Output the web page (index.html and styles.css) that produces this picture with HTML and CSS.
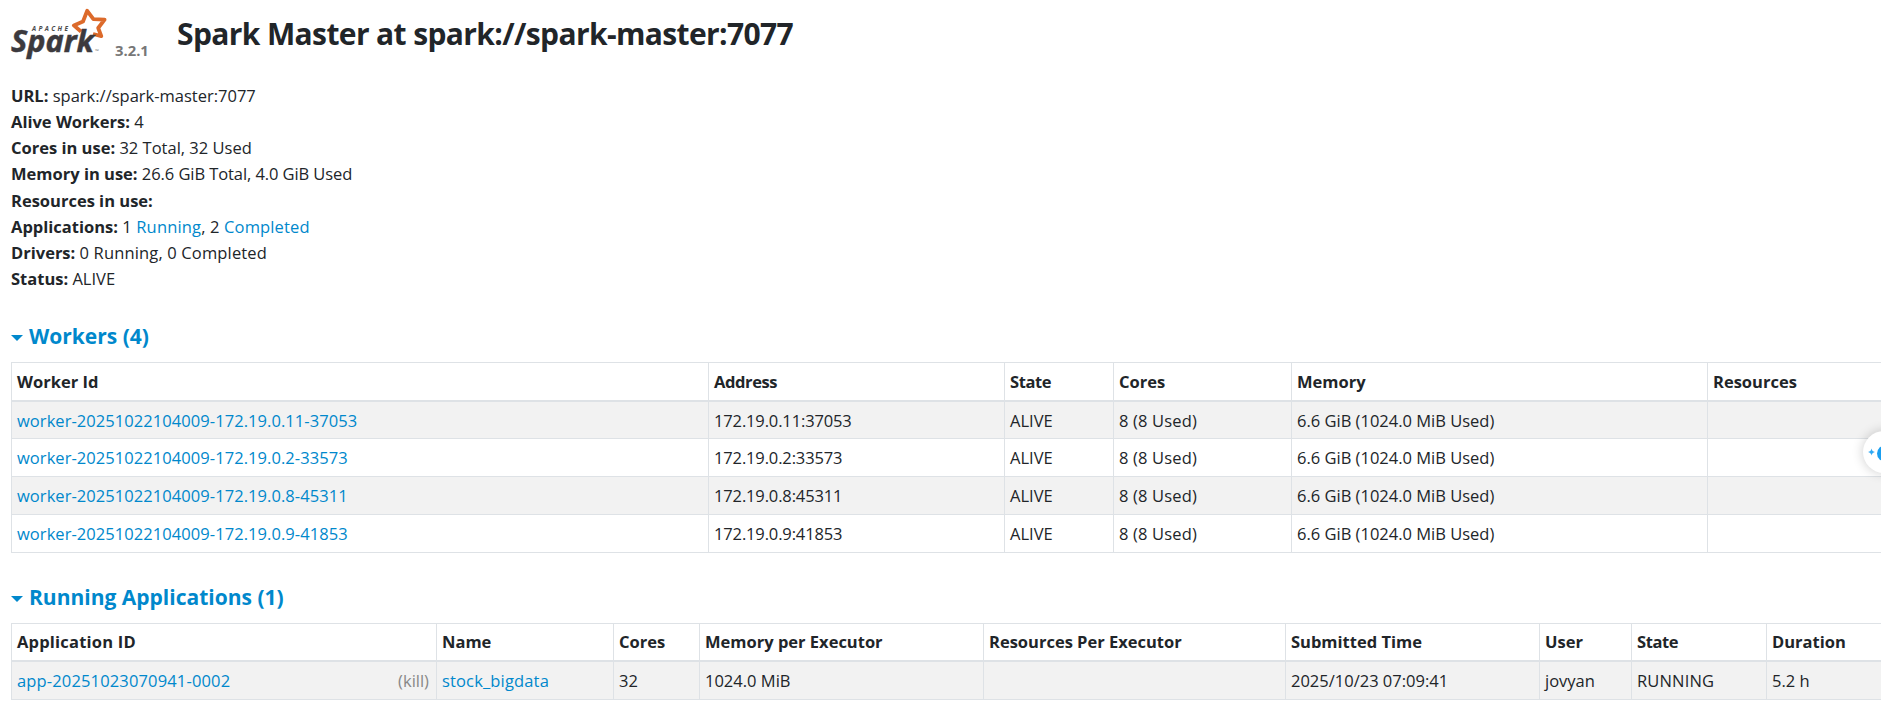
FILE: index.html
```html
<!DOCTYPE html>
<html lang="en">
<head>
<meta charset="utf-8">
<title>Spark Master at spark://spark-master:7077</title>
<link rel="stylesheet" href="styles.css">
</head>
<body>
<header class="masthead">
  <a class="brand" href="#">
    <svg class="logo" width="92" height="54" viewBox="10 6 92 54" role="img" aria-label="Apache Spark">
      <path class="star" d="M81 31.5 L73.8 25.4 L83 21.5 L87.2 10.8 L93.4 19.2 L104.6 19.6 L98.2 28 L101.3 36.2 L93 34"/>
      <text class="logo-apache" x="32" y="30.5" textLength="36">APACHE</text>
      <text class="logo-spark" x="11" y="51.5" textLength="83" lengthAdjust="spacingAndGlyphs">Spark</text>
      <text class="logo-tm" x="95" y="53">™</text>
    </svg>
    <span class="version">3.2.1</span>
  </a>
  <h1 class="title"><span>Spark Master at spark://spark-master:7077</span></h1>
</header>
<main>
  <ul class="summary">
    <li><strong>URL:</strong> <span>spark://spark-master:7077</span></li>
    <li><strong>Alive Workers:</strong> <span>4</span></li>
    <li><strong>Cores in use:</strong> <span>32 Total, 32 Used</span></li>
    <li><strong>Memory in use:</strong> <span class="snug">26.6 GiB Total, 4.0 GiB Used</span></li>
    <li><strong>Resources in use:</strong></li>
    <li><strong>Applications:</strong> <span class="airy">1 <a href="#">Running</a>, 2 <a href="#">Completed</a></span></li>
    <li><strong>Drivers:</strong> <span class="airy">0 Running, 0 Completed</span></li>
    <li><strong>Status:</strong> <span>ALIVE</span></li>
  </ul>

  <h2 class="section workers-head"><i class="caret"></i><a href="#">Workers (4)</a></h2>
  <table class="grid workers">
    <colgroup><col class="w-id"><col class="w-addr"><col class="w-state"><col class="w-cores"><col class="w-mem"><col class="w-res"></colgroup>
    <thead><tr><th>Worker Id</th><th class="narrow">Address</th><th class="narrow">State</th><th>Cores</th><th>Memory</th><th>Resources</th></tr></thead>
    <tbody>
      <tr><td><a href="#">worker-20251022104009-172.19.0.11-37053</a></td><td class="addr">172.19.0.11:37053</td><td>ALIVE</td><td class="airy">8 (8 Used)</td><td>6.6 GiB (1024.0 MiB Used)</td><td></td></tr>
      <tr><td><a href="#">worker-20251022104009-172.19.0.2-33573</a></td><td class="addr">172.19.0.2:33573</td><td>ALIVE</td><td class="airy">8 (8 Used)</td><td>6.6 GiB (1024.0 MiB Used)</td><td></td></tr>
      <tr><td><a href="#">worker-20251022104009-172.19.0.8-45311</a></td><td class="addr">172.19.0.8:45311</td><td>ALIVE</td><td class="airy">8 (8 Used)</td><td>6.6 GiB (1024.0 MiB Used)</td><td></td></tr>
      <tr><td><a href="#">worker-20251022104009-172.19.0.9-41853</a></td><td class="addr">172.19.0.9:41853</td><td>ALIVE</td><td class="airy">8 (8 Used)</td><td>6.6 GiB (1024.0 MiB Used)</td><td></td></tr>
    </tbody>
  </table>

  <h2 class="section apps-head"><i class="caret"></i><a href="#">Running Applications (1)</a></h2>
  <table class="grid apps">
    <colgroup><col class="a-id"><col class="a-name"><col class="a-cores"><col class="a-mem"><col class="a-res"><col class="a-time"><col class="a-user"><col class="a-state"><col class="a-dur"></colgroup>
    <thead><tr><th class="wide">Application ID</th><th>Name</th><th>Cores</th><th>Memory per Executor</th><th>Resources Per Executor</th><th>Submitted Time</th><th>User</th><th class="narrow">State</th><th>Duration</th></tr></thead>
    <tbody>
      <tr><td><div class="app-cell"><a class="airy" href="#">app-20251023070941-0002</a><a class="kill" href="#">(kill)</a></div></td><td class="airy"><a href="#">stock_bigdata</a></td><td>32</td><td>1024.0 MiB</td><td></td><td>2025/10/23 07:09:41</td><td>jovyan</td><td class="airy">RUNNING</td><td>5.2 h</td></tr>
    </tbody>
  </table>
</main>
<div class="assistant">
  <svg width="42" height="42" viewBox="0 0 42 42" aria-hidden="true">
    <path fill="#2fa9f4" d="M8.5 17.5 Q9 20.5 12 21 Q9 21.5 8.5 24.5 Q8 21.5 5 21 Q8 20.5 8.5 17.5Z"/>
    <ellipse fill="#1a9ff0" cx="23" cy="22.5" rx="9" ry="8.5"/>
  </svg>
</div>
</body>
</html>
```

FILE: styles.css
```css
* { box-sizing: border-box; }
html, body { height: 100%; overflow: hidden; }
body {
  margin: 0;
  background: #fff;
  color: #212529;
  font: 16.5px/26.25px "Open Sans", "Noto Sans", sans-serif;
  white-space: nowrap;
}
a { color: #0088cc; text-decoration: none; }
strong, th { font-weight: 700; letter-spacing: 0; }

.airy { letter-spacing: 0.15px; }
.snug { letter-spacing: -0.08px; }

.masthead { display: flex; height: 82.5px; padding: 6px 0 0 10px; }
.brand { display: flex; width: 167px; }
.logo { overflow: visible; }
.star { fill: none; stroke: #dc6a2b; stroke-width: 3.8; stroke-linejoin: round; }
.logo-apache { font: italic 700 6.5px "Open Sans", sans-serif; fill: #4a4a4c; }
.logo-spark { font: italic 700 31px "Open Sans", sans-serif; fill: #3c3a3e; stroke: #3c3a3e; stroke-width: 0.5; }
.logo-tm { font: 5px "Open Sans", sans-serif; fill: #777; }
.version { margin: 31px 0 0 13px; color: #777; font-weight: 700; font-size: 14.8px; line-height: 26px; }
.title { margin: 10px 0 0; font-size: 30px; line-height: 36px; font-weight: 700; letter-spacing: -0.62px; }

.summary { margin: 0; padding: 0 0 0 11px; list-style: none; height: 210px; }

.section {
  display: flex; align-items: center; gap: 6px;
  margin: 0; padding-left: 11px;
  font-size: 21px; line-height: 30px; font-weight: 700; letter-spacing: 0;
}
.workers-head { height: 69.5px; padding-top: 17px; }
.apps-head { height: 70px; padding-top: 17px; }
.caret { border: 6px solid transparent; border-top-color: #0088cc; border-bottom: 0; margin-top: 5px; }

.grid {
  table-layout: fixed; border-collapse: separate; border-spacing: 0;
  margin-left: 11px;
  border-top: 1px solid #dee2e6;
}
.grid th, .grid td { padding: 1px 0 0 5px; text-align: left; border-left: 1px solid #dee2e6; overflow: hidden; }
.grid th { height: 39px; border-bottom: 2px solid #dee2e6; }
.grid td { height: 38px; padding-top: 2px; border-bottom: 1px solid #dee2e6; }
.grid .wide { letter-spacing: 0.2px; }
.grid .narrow { letter-spacing: -0.4px; }
.grid .addr { letter-spacing: -0.14px; }
.grid tbody tr:nth-child(odd) { background: #f2f2f2; }
.workers { width: 1880px; }
.workers td:first-child { letter-spacing: 0.06px; }
.workers tbody tr:first-child td { height: 37px; }
.apps { width: 1880px; }
.apps th { height: 38px; }

.w-id { width: 697px; }
.w-addr { width: 296px; }
.w-state { width: 109px; }
.w-cores { width: 178px; }
.w-mem { width: 416px; }

.a-id { width: 425px; }
.a-name { width: 177px; }
.a-cores { width: 86px; }
.a-mem { width: 284px; }
.a-res { width: 302px; }
.a-time { width: 254px; }
.a-user { width: 92px; }
.a-state { width: 135px; }

.app-cell { display: flex; justify-content: space-between; padding-right: 7px; }
.kill { color: #888; }

.assistant {
  position: absolute; left: 1863px; top: 431px;
  width: 42px; height: 42px; border-radius: 50%;
  background: #fff; box-shadow: 0 0 12px rgba(0, 0, 0, 0.2);
}
```
